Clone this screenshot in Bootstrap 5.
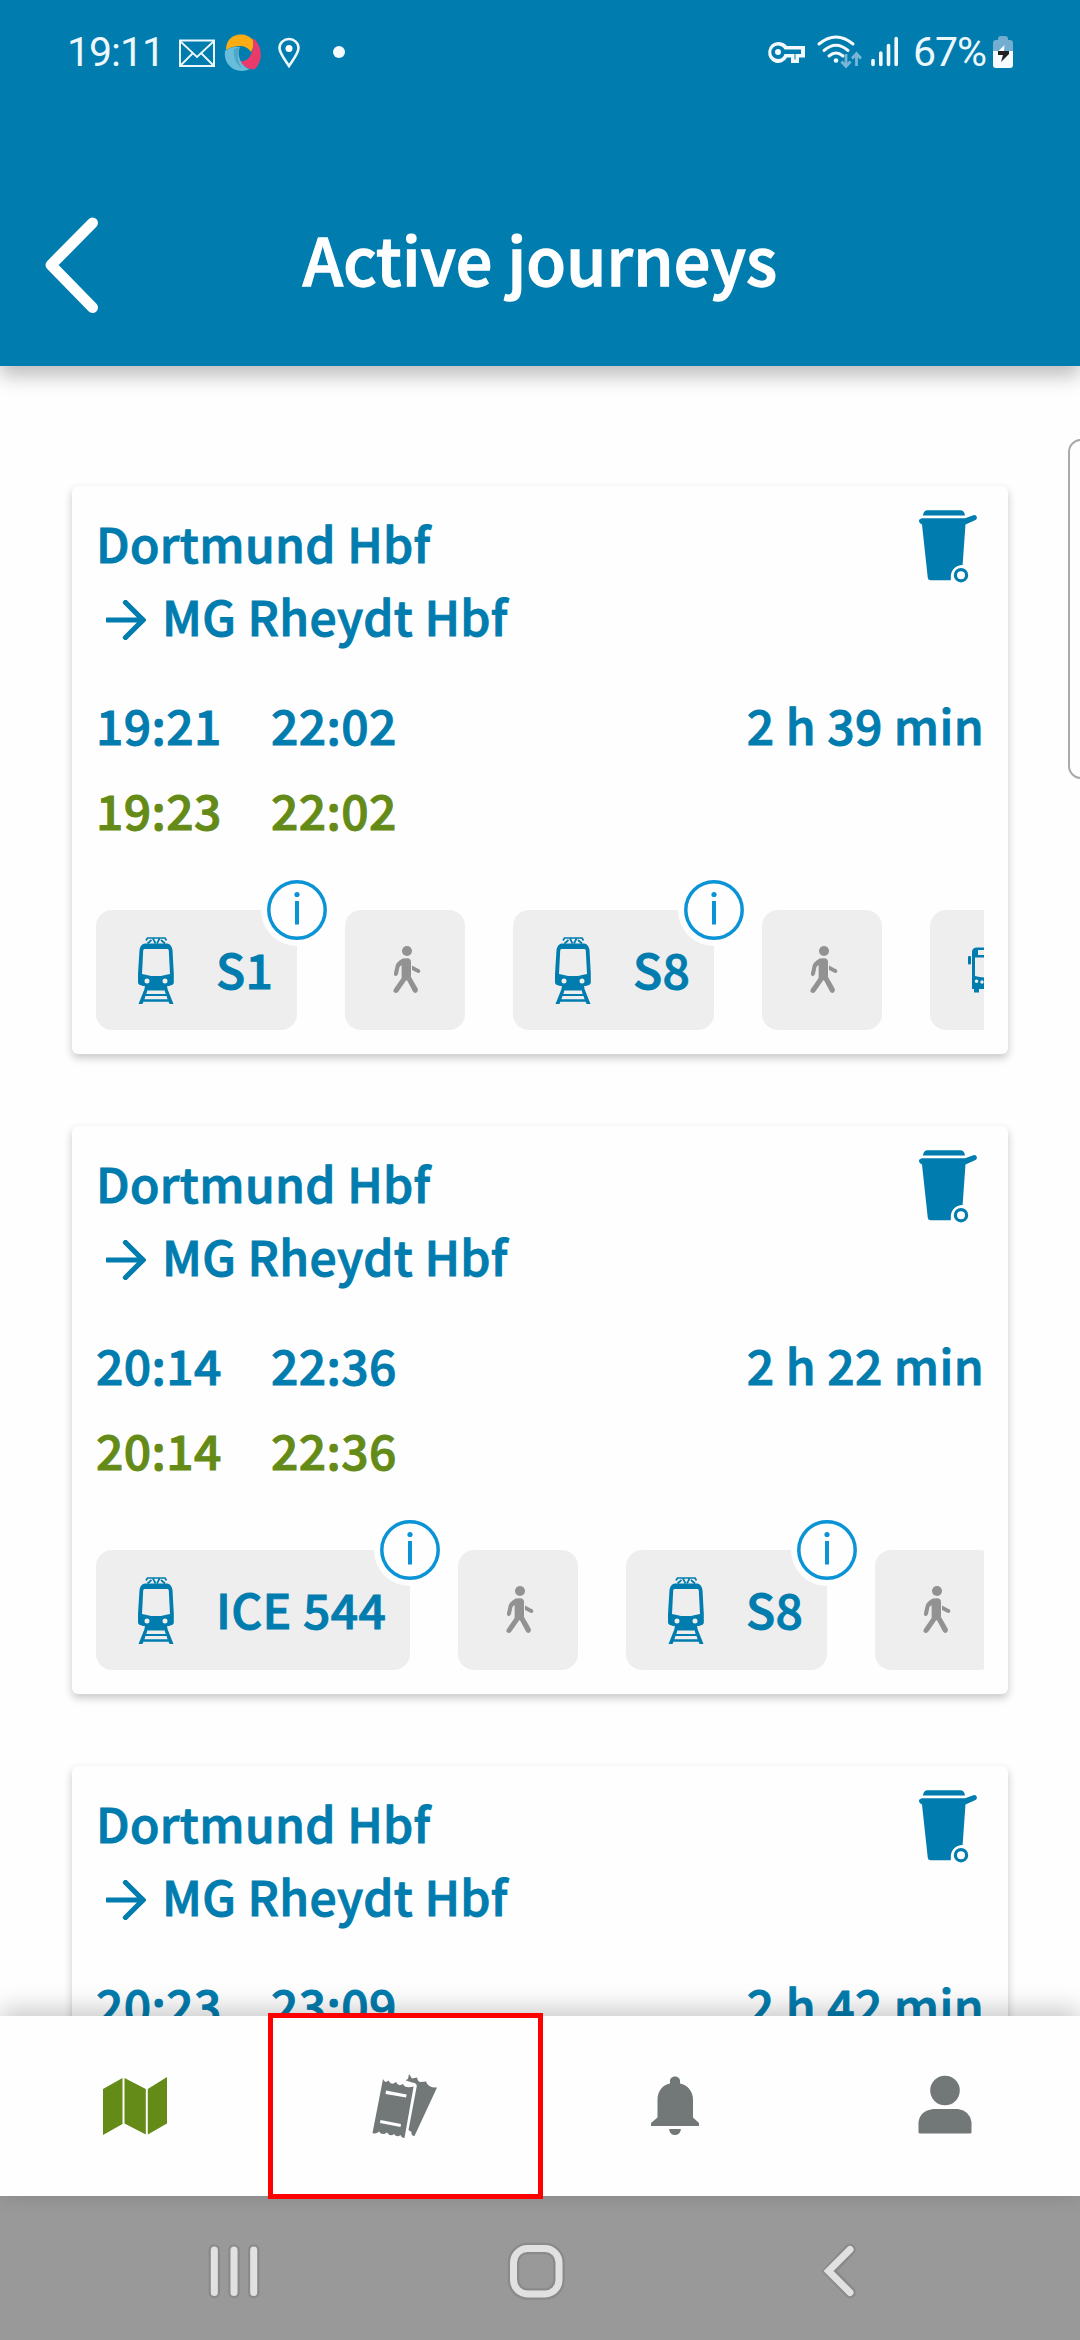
<!DOCTYPE html>
<html lang="en">
<head>
<meta charset="utf-8">
<meta name="viewport" content="width=device-width, initial-scale=1">
<title>Active journeys</title>
<link href="https://cdn.jsdelivr.net/npm/bootstrap@5.3.0/dist/css/bootstrap.min.css" rel="stylesheet">
<style>
  :root { --brand: #007cae; --live: #648a17; --tab: #727777; }
  html, body { height: 2340px; overflow: hidden; }
  body { font-family: "Noto Sans CJK SC", "Noto Sans CJK JP", sans-serif; font-weight: 500; color: var(--brand); background: #fefefe; }
  svg { display: block; flex: none; overflow: visible; }
  .app-head { height: 366px; background: var(--brand); box-shadow: 0 10px 18px rgba(0,0,0,.25); z-index: 3; color: #fff; }
  .status-bar { height: 104px; padding-left: 67px; padding-right: 67px; font: 400 41px/104px Roboto, sans-serif; letter-spacing: -1px; color: #eef7fb; }
  .notif { left: 170px; top: 0; }
  .pct { margin-left: 4px; margin-right: 7px; }
  .title-bar { height: 262px; }
  .title-bar h1 { font-size: 64.6px; line-height: 94px; font-weight: 500; margin: 107px 0 0; letter-spacing: .25px; -webkit-text-stroke: 1.4px currentColor; }
  .back-btn { left: 39px; top: 111px; }
  .trips { flex: 1 1 0; min-height: 0; overflow: hidden; padding: 120px 72px 0; }
  .trip { height: 568px; flex: none; margin-bottom: 72px; border: 0; border-radius: 6px; background: #fefefe; padding: 20px 24px 0; box-shadow: 0 4px 9px rgba(0,0,0,.22); color: var(--brand); font-size: 48px; letter-spacing: .38px; -webkit-text-stroke: 1px currentColor; }
  .trip svg { -webkit-text-stroke: 0; }
  .route { line-height: 73px; }
  .arrow-gap { margin: 8px 16px 0 10px; }
  .bin { margin-top: 4px; margin-right: 7px; }
  .times { line-height: 85px; }
  .times.planned { margin-top: 30px; }
  .times .start { width: 175px; }
  .live { color: var(--live); }
  .legs { margin-top: 17px; padding-top: 41px; gap: 48px; overflow: hidden; height: 170px; }
  .leg { height: 120px; flex: none; background: #eee; border-radius: 16px; }
  .leg.ride { width: 201px; padding-left: 42px; }
  .leg.ice { width: 314px; }
  .leg.walk { width: 120px; }
  .leg.walk svg { margin-left: 3px; }
  .leg.bus-leg svg { margin-left: 0; }
  .leg .line-name { margin-left: 42px; line-height: 70px; padding-bottom: 5px; white-space: nowrap; }
  .info { right: -36px; top: -36px; }
  .edge-panel { left: 1068px; top: 439px; width: 30px; height: 340px; border: 2.5px solid #aaa; border-radius: 13px; background: #fefefe; z-index: 2; }
  .tab-bar { height: 180px; background: #fefefe; box-shadow: 0 -6px 24px rgba(0,0,0,.22); z-index: 4; }
  .tab-bar > a { flex: 1 1 0; color: var(--tab); }
  .tab-bar > a.current { color: var(--live); }
  .focus-box { left: -2.5px; right: -3px; top: -3px; bottom: -3px; border: 5px solid #fe0000; }
  .sys-bar { height: 144px; background: #999; z-index: 2; }
</style>
</head>
<body class="position-relative d-flex flex-column">

<svg width="0" height="0" class="position-absolute">
  <defs>
    <symbol id="i-arrow" viewBox="0 0 40 40"><path d="M1.500 20H37M19.500 2.500 37 20 19.500 37.500" fill="none" stroke="currentColor" stroke-width="5.200" stroke-linecap="round" stroke-linejoin="miter"/></symbol>
    <symbol id="i-bin" viewBox="0 0 58 73"><g fill="currentColor">
      <path d="M3.800 5.500C4.500 2 6 0.300 8.500 0.300H41C44 0.300 45.500 2 46 5.500Z"/>
      <path d="M3 8.300H46L54.500 5.200C57.500 4.500 59.500 8.500 56 10.300L46.500 14.600 43.600 55C36.500 55 31.800 60 31.800 67V70.300H12C9.800 70.300 8.900 69.200 8.700 67L3 14.400C-1 13-1 9 3 8.300Z"/></g>
      <circle cx="42" cy="65.200" r="5.600" fill="none" stroke="currentColor" stroke-width="3.200"/></symbol>
    <symbol id="i-train" viewBox="0 0 36 67">
      <path d="M8 3.500 9.500 1H27L28.500 3.500M15 1.500 17.500 6.500M21.500 1.500 19 6.500M13.500 3 9.500 6.500M23 3 27 6.500" fill="none" stroke="currentColor" stroke-width="1.700"/>
      <path fill="currentColor" fill-rule="evenodd" d="M7 6.500H29C32.500 7 34 10 34.500 13L35.800 37V45.500C35.800 47.500 34 48 31 49H5C2 48 0 47.500 0 45.500V37L1.500 13C2 10 3.500 7 7 6.500ZM6.500 12Q5.300 12 5.200 13.500L4 37Q9 38 13 39H23Q27 38 32 37L30.800 13.500Q30.700 12 29.500 12ZM9 41.500A2.500 2.500 0 1 0 9 46.500 2.500 2.500 0 1 0 9 41.500ZM27 41.500A2.500 2.500 0 1 0 27 46.500 2.500 2.500 0 1 0 27 41.500Z"/>
      <path fill="currentColor" fill-rule="evenodd" d="M7 48H29L29.500 52 35.500 67H31.500L30.600 64.800H5.400L4.500 67H.5L6.500 52ZM9.300 53.500 8.400 57H27.600L26.700 53.500ZM7.500 59 6.400 62.300H29.600L28.500 59Z"/></symbol>
    <symbol id="i-walk" viewBox="0 0 28 48"><circle cx="14" cy="5" r="5" fill="currentColor"/>
      <path d="M14 12.200C17 12.200 18 14 18 16V31L24.600 42.500C26 46 22 48.600 20 45.500L14.700 35.500C13.500 33.500 13 34 12 36L5 46C2.500 48.500-1 46 1 43L8.600 32V19L6.500 21 5 28C4 31 .5 30.500 1 27L2.700 19.500C3.300 17 8 13 10 12.600Z" fill="currentColor"/>
      <path d="M19 19.500 27 23.800C28 26 26.500 27.500 24.500 26.800L19 24Z" fill="currentColor"/></symbol>
    <symbol id="i-bus" viewBox="0 0 44 46"><path fill="currentColor" fill-rule="evenodd" d="M8 .5H36Q40 1 40 5V42H36V45.500H31V42H11V45.500H6V42H4V5Q4 1 8 .5ZM10 3V8H34V3ZM7 10.500V29Q22 32.500 37 29V10.500ZM8.500 32.500A1.800 1.800 0 1 0 8.500 36.100 1.800 1.800 0 1 0 8.500 32.500ZM14 33.300A1.700 1.700 0 1 0 14 36.700 1.700 1.700 0 1 0 14 33.300Z"/><rect y="9" width="3" height="8.500" rx="1" fill="currentColor"/><rect x="41" y="9" width="3" height="8.500" rx="1" fill="currentColor"/></symbol>
    <symbol id="i-info" viewBox="0 0 72 72"><circle cx="36" cy="36" r="36" fill="#fefefe"/><circle cx="36" cy="36" r="28.200" fill="none" stroke="#0a94d6" stroke-width="3.500"/><circle cx="36" cy="20.500" r="2.600" fill="#0a94d6"/><path d="M36 27V50.500" stroke="#0a94d6" stroke-width="4"/></symbol>
  </defs>
</svg>

<header class="app-head position-relative flex-shrink-0">
  <div class="status-bar d-flex align-items-center">
    <span>19:11</span>
    <svg class="notif position-absolute" width="250" height="104" viewBox="170 0 250 104">
      <g fill="none" stroke="#eef7fb">
        <rect x="180" y="40.500" width="34" height="25.500" stroke-width="2"/><path d="M180 41 197 57 214 41M180 66 193 53M214 66 201 53" stroke-width="1.800"/>
        <path d="M289 66C284 58.500 279.500 53 279.500 48A9.500 9 0 0 1 298.500 48C298.500 53 294 58.500 289 66Z" stroke-width="2.600"/>
      </g>
      <circle cx="289" cy="48.500" r="3.500" fill="#fff"/><circle cx="339" cy="52" r="6" fill="#f3f9fc"/>
      <path d="M226 50C226 32 246 31 253 40C254 45 253 49 251 52C246 44 235 45 226 50Z" fill="#fdad13"/>
      <path d="M253 38C262 45 264 60 255 69C250 70 243 67 240 61C248 63 255 53 253 38Z" fill="#ea3a6c"/>
      <path d="M225 51C229 47 236 46 240 47C236 55 242 68 250 69C237 75 223 66 225 51Z" fill="#67bdda"/>
      <path d="M240 47Q235 57 242 69Q232 60 234 49Z" fill="#4fa7c8"/>
    </svg>
    <svg class="ms-auto" width="142" height="40" viewBox="768 32 142 40">
      <path fill="#f3f9fc" fill-rule="evenodd" d="M779 42A10 10.500 0 1 0 788 57.500H792V63H800V57.500H806V46H788Q785 42 779 42ZM779 45.500Q784 46 785.500 49.500H802V54H796.500V59.500H795.500V54H785.500Q784 59 779 59A6.700 6.700 0 1 1 779 45.500Z"/><circle cx="779" cy="52" r="3" fill="#f3f9fc"/>
      <g fill="none" stroke="#f3f9fc" stroke-width="3" stroke-linecap="round"><path d="M820 44Q837 30 854 44M825 50.500Q837 40 849 50.500M830 56Q837 50 844 56"/></g><circle cx="837" cy="60.500" r="2.300" fill="#f3f9fc"/>
      <g fill="none" stroke="#78b5d7" stroke-width="2.800"><path d="M847 54V66M842.500 61.500 847 66.500 851.500 61.500M857.500 66V54M853 58.500 857.500 53.500 862 58.500"/></g>
      <g stroke="#f3f9fc" stroke-width="3.600" stroke-linecap="round"><path d="M874 60.500V64.500M881.800 53V64.500M889.500 45.500V64.500M897.200 38.500V64.500"/></g>
    </svg>
    <span class="pct">67%</span>
    <svg width="20" height="32" viewBox="993 36 20 32"><path d="M998 39Q998 36 1001 36H1005Q1008 36 1008 39V40H1010Q1013 40 1013 43V51H993V43Q993 40 996 40H998Z" fill="#73adcf"/><path d="M993 51H1013V65Q1013 68 1010 68H996Q993 68 993 65Z" fill="#f7fbfd"/><path d="M1004.500 45 998.500 51H1004Z" fill="#fff"/><path d="M998 51H1009V54L1001 62 1003 55H998Z" fill="#222"/></svg>
  </div>
  <div class="title-bar d-flex justify-content-center align-items-start position-relative">
    <svg class="back-btn position-absolute" width="64" height="100" viewBox="40 216 64 100"><path d="M93.500 224 52 266 93.500 308.500" fill="none" stroke="#fff" stroke-width="11" stroke-linecap="round" stroke-linejoin="round"/></svg>
    <h1>Active journeys</h1>
  </div>
</header>

<main class="trips d-flex flex-column">
  <section class="card trip">
    <div class="d-flex justify-content-between align-items-start">
      <div class="route"><div>Dortmund Hbf</div><div class="d-flex align-items-center"><svg class="arrow-gap" width="40" height="40"><use href="#i-arrow"/></svg>MG Rheydt Hbf</div></div>
      <svg class="bin" width="58" height="73"><use href="#i-bin"/></svg>
    </div>
    <div class="times planned d-flex"><span class="start">19:21</span><span>22:02</span><span class="ms-auto">2 h 39 min</span></div>
    <div class="times live d-flex"><span class="start">19:23</span><span>22:02</span></div>
    <div class="legs d-flex">
      <div class="leg ride position-relative d-flex align-items-center"><svg width="36" height="67"><use href="#i-train"/></svg><span class="line-name">S1</span><svg class="info position-absolute" width="72" height="72"><use href="#i-info"/></svg></div>
      <div class="leg walk d-flex align-items-center justify-content-center"><svg width="28" height="48" color="#929292"><use href="#i-walk"/></svg></div>
      <div class="leg ride position-relative d-flex align-items-center"><svg width="36" height="67"><use href="#i-train"/></svg><span class="line-name">S8</span><svg class="info position-absolute" width="72" height="72"><use href="#i-info"/></svg></div>
      <div class="leg walk d-flex align-items-center justify-content-center"><svg width="28" height="48" color="#929292"><use href="#i-walk"/></svg></div>
      <div class="leg walk bus-leg d-flex align-items-center justify-content-center"><svg width="44" height="46"><use href="#i-bus"/></svg></div>
    </div>
  </section>

  <section class="card trip">
    <div class="d-flex justify-content-between align-items-start">
      <div class="route"><div>Dortmund Hbf</div><div class="d-flex align-items-center"><svg class="arrow-gap" width="40" height="40"><use href="#i-arrow"/></svg>MG Rheydt Hbf</div></div>
      <svg class="bin" width="58" height="73"><use href="#i-bin"/></svg>
    </div>
    <div class="times planned d-flex"><span class="start">20:14</span><span>22:36</span><span class="ms-auto">2 h 22 min</span></div>
    <div class="times live d-flex"><span class="start">20:14</span><span>22:36</span></div>
    <div class="legs d-flex">
      <div class="leg ride ice position-relative d-flex align-items-center"><svg width="36" height="67"><use href="#i-train"/></svg><span class="line-name">ICE 544</span><svg class="info position-absolute" width="72" height="72"><use href="#i-info"/></svg></div>
      <div class="leg walk d-flex align-items-center justify-content-center"><svg width="28" height="48" color="#929292"><use href="#i-walk"/></svg></div>
      <div class="leg ride position-relative d-flex align-items-center"><svg width="36" height="67"><use href="#i-train"/></svg><span class="line-name">S8</span><svg class="info position-absolute" width="72" height="72"><use href="#i-info"/></svg></div>
      <div class="leg walk d-flex align-items-center justify-content-center"><svg width="28" height="48" color="#929292"><use href="#i-walk"/></svg></div>
    </div>
  </section>

  <section class="card trip">
    <div class="d-flex justify-content-between align-items-start">
      <div class="route"><div>Dortmund Hbf</div><div class="d-flex align-items-center"><svg class="arrow-gap" width="40" height="40"><use href="#i-arrow"/></svg>MG Rheydt Hbf</div></div>
      <svg class="bin" width="58" height="73"><use href="#i-bin"/></svg>
    </div>
    <div class="times planned d-flex"><span class="start">20:23</span><span>23:09</span><span class="ms-auto">2 h 42 min</span></div>
  </section>
</main>
<div class="edge-panel position-absolute"></div>

<nav class="tab-bar position-relative flex-shrink-0 d-flex">
  <a class="current d-flex align-items-center justify-content-center"><svg width="64" height="60" viewBox="103 2076 64 60"><path fill="currentColor" d="M103 2089 122.500 2078V2124L103 2135ZM124.500 2078 145.800 2089V2134.500L124.500 2123.500ZM147.800 2089 167 2077V2123.500L147.800 2134.500Z"/></svg></a>
  <a class="position-relative d-flex align-items-center justify-content-center"><svg width="66" height="66" viewBox="372 2073 66 66"><path fill="currentColor" fill-rule="evenodd" d="M383 2079Q385 2084 388.500 2080.500 391 2086 396 2082 398 2087 403 2084 405 2089 413.600 2086.500L404.500 2138Q401.500 2138 400.500 2135 397 2138 394 2134 390 2137 387 2132.500 382 2136 379 2131.500 376 2134.500 372.500 2133ZM386 2090.500 385.500 2094 406 2097.500 406.700 2094.500ZM380.500 2120 380 2123 400.500 2127 401 2124Z"/><path fill="currentColor" d="M409 2074Q411 2077 412 2078.500L417 2077.500Q418 2082 420.500 2082L426 2081.500Q428 2088 437 2087.500L414.500 2136Q411 2136 411.500 2132L408.500 2130 416.800 2086Q416.500 2082.500 412 2082.500L406 2080.500Q405 2080 408 2079Z"/></svg><span class="focus-box position-absolute"></span></a>
  <a class="d-flex align-items-center justify-content-center"><svg width="48" height="60" viewBox="651 2075.500 48 60"><path fill="currentColor" d="M651 2125.500V2122.500L657.500 2117V2099C657.500 2090 663 2084.500 670 2083V2080.500C670 2074.500 680 2074.500 680 2080.500V2083C687 2084.500 693 2090 693 2099V2117L699 2122.500V2125.500ZM669 2128.500H681Q680 2134.500 675 2134.500 670 2134.500 669 2128.500Z"/></svg></a>
  <a class="d-flex align-items-center justify-content-center"><svg width="54" height="62" viewBox="918 2074 54 62"><circle cx="945" cy="2089.500" r="14.800" fill="currentColor"/><path fill="currentColor" d="M933 2108H958Q970 2110 971.500 2121V2131Q971.500 2132.500 970 2132.500H920Q918.500 2132.500 918.500 2131V2121Q920 2110 933 2108Z"/></svg></a>
</nav>

<footer class="sys-bar position-relative flex-shrink-0 d-flex align-items-center justify-content-center">
  <svg width="1080" height="144" viewBox="0 2196 1080 144" fill="none" stroke-linecap="round">
    <g stroke="#8a8a8a" stroke-width="11.500"><path d="M214.300 2250V2292.500M234 2250V2292.500M253.700 2250V2292.500M850 2249.500 829.500 2271 850 2292.500"/><rect x="513.500" y="2248.500" width="45.500" height="45.500" rx="14"/></g>
    <g stroke="#e1e1e1" stroke-width="7"><path d="M214.300 2250V2292.500M234 2250V2292.500M253.700 2250V2292.500M850 2249.500 828.500 2271 850 2292.500"/><rect x="513.500" y="2248.500" width="45.500" height="45.500" rx="14"/></g>
  </svg>
</footer>
<script src="https://cdn.jsdelivr.net/npm/bootstrap@5.3.0/dist/js/bootstrap.bundle.min.js"></script>
</body>
</html>
